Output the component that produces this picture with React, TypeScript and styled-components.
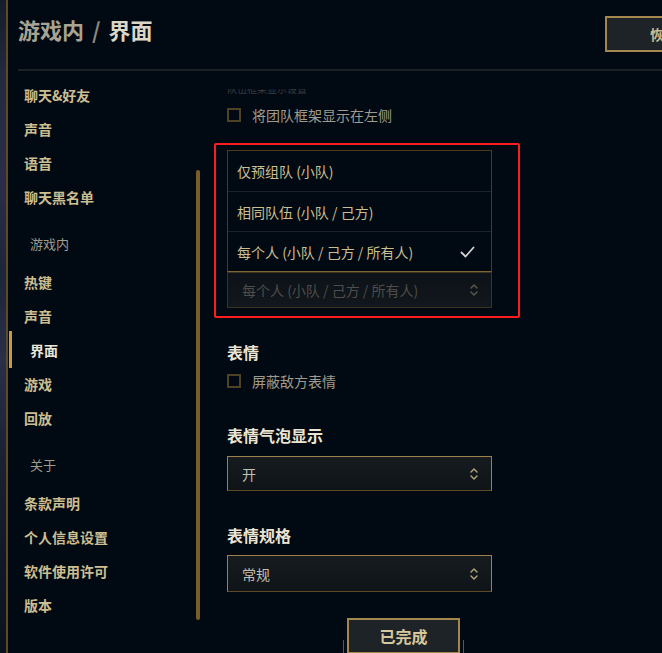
import React from "react";
import styled, { createGlobalStyle } from "styled-components";

const Global = createGlobalStyle`
  html, body { margin: 0; padding: 0; background: #010a13; }
  body { font-family: "Noto Sans CJK SC", "Noto Sans", sans-serif; }
  * { box-sizing: border-box; }
`;

const Screen = styled.div`
  display: flex;
  width: 662px;
  height: 653px;
  overflow: hidden;
  background: #010a13;
`;

const ArtStrip = styled.div`
  width: 6px;
  flex-shrink: 0;
  background: linear-gradient(
    180deg,
    #161c2a 0%,
    #232a3e 12%,
    #2c2c4a 28%,
    #1d2538 42%,
    #2a2f4a 55%,
    #1a2132 70%,
    #121826 85%,
    #0c121d 100%
  );
`;

const FrameLine = styled.div`
  width: 2px;
  flex-shrink: 0;
  background: #5e4a22;
`;

const Main = styled.div`
  flex: 1;
  display: flex;
  flex-direction: column;
  min-width: 0;
`;

const Header = styled.header`
  display: grid;
  grid-template-columns: 587px 174px;
  align-items: start;
  height: 71px;
  flex-shrink: 0;
  margin-left: 10px;
  border-bottom: 2px solid #1c2126;
`;

const Title = styled.h1`
  margin: 14px 0 0;
  font-size: 22px;
  line-height: 30px;
  font-weight: 700;
  color: #a8a392;
  white-space: nowrap;
`;

const TitleCurrent = styled.span`
  color: #dcd6c6;
`;

const TitleSep = styled.span`
  color: #8c887c;
  margin: 0 8px;
`;

const ResetButton = styled.button`
  margin-top: 16px;
  width: 174px;
  height: 36px;
  border: 2px solid #a3874c;
  background: #1e2328;
  color: #cdbe91;
  font-family: inherit;
  font-size: 14px;
  font-weight: 700;
  white-space: nowrap;
  padding: 0;
`;

const Body = styled.div`
  flex: 1;
  display: flex;
  min-height: 0;
  overflow: hidden;
`;

const Sidebar = styled.nav`
  width: 188px;
  flex-shrink: 0;
  padding-top: 7px;
  display: flex;
  flex-direction: column;
  & > * {
    flex-shrink: 0;
  }
`;

const NavItem = styled.div<{ $active?: boolean }>`
  position: relative;
  height: 34px;
  display: flex;
  align-items: center;
  padding-left: ${(p) => (p.$active ? "22px" : "16px")};
  font-size: 14px;
  font-weight: 700;
  color: ${(p) => (p.$active ? "#ece6d6" : "#cdbe91")};
  white-space: nowrap;

  ${(p) =>
    p.$active &&
    `
    &::before {
      content: "";
      position: absolute;
      left: 1px;
      top: -2px;
      width: 3px;
      height: 37px;
      background: #c89b3c;
    }
  `}
`;

const NavSection = styled.div`
  height: 34px;
  margin: 12px 0 5px;
  display: flex;
  align-items: center;
  padding-left: 22px;
  font-size: 13px;
  font-weight: 400;
  color: #a09b8c;
`;

const ScrollTrack = styled.div`
  width: 4px;
  flex-shrink: 0;
  padding-top: 99px;
`;

const ScrollThumb = styled.div`
  width: 4px;
  height: 450px;
  border-radius: 2px;
  background: #7a5c29;
`;

const Content = styled.section`
  margin-left: 27px;
  padding-top: 18px;
  width: 265px;
  flex-shrink: 0;
  display: flex;
  flex-direction: column;
  & > * {
    flex-shrink: 0;
  }
`;

const ClippedLabel = styled.div`
  height: 5px;
  overflow: hidden;
  display: flex;
  align-items: flex-end;
  font-size: 10px;
  line-height: 10px;
  color: #363b41;
  white-space: nowrap;
`;

const CheckRow = styled.label<{ $mt: number }>`
  display: flex;
  align-items: center;
  gap: 11px;
  height: 20px;
  margin-top: ${(p) => p.$mt}px;
  font-size: 14px;
  color: #a09b8c;
`;

const CheckBox = styled.span`
  width: 14px;
  height: 14px;
  border: 2px solid #4f4124;
  flex-shrink: 0;
`;

const Annotated = styled.div<{ $mt: number }>`
  position: relative;
  margin-top: ${(p) => p.$mt}px;

  &::after {
    content: "";
    position: absolute;
    top: -7px;
    left: -13px;
    right: -28px;
    bottom: -10px;
    border: 2px solid #ff1c1c;
    border-radius: 2px;
    pointer-events: none;
  }
`;

const OptionList = styled.ul`
  list-style: none;
  margin: 0;
  padding: 0;
  border: 1px solid #4a3c1f;
  border-bottom-color: #7d6534;
  background: #010a13;
`;

const Option = styled.li`
  height: 40px;
  display: flex;
  align-items: center;
  justify-content: space-between;
  padding: 0 16px 0 9px;
  font-size: 14px;
  color: #cdbe91;
  & + & {
    border-top: 1px solid #1c2228;
  }
`;

const Select = styled.div<{ $dim?: boolean; $mt?: number; $h?: number }>`
  height: ${(p) => p.$h ?? 35}px;
  margin-top: ${(p) => p.$mt ?? 0}px;
  display: flex;
  align-items: center;
  justify-content: space-between;
  padding: 0 13px 0 14px;
  font-size: 14px;
  color: ${(p) => (p.$dim ? "#4e4d49" : "#c3beb0")};
  background: ${(p) =>
    p.$dim ? "linear-gradient(180deg,#0c1217,#11171c)" : "linear-gradient(180deg,#161b20,#0f1419)"};
  border: 1px solid ${(p) => (p.$dim ? "#3c3220" : "#9c8248")};
  ${(p) => !p.$dim && "border-bottom-color: #5e4a24;"}
`;

const Heading = styled.h3<{ $mt: number }>`
  margin: ${(p) => p.$mt}px 0 0;
  height: 20px;
  line-height: 20px;
  font-size: 16px;
  font-weight: 700;
  color: #ece4d2;
`;

const DoneButton = styled.button`
  position: relative;
  margin: 26px 0 0 120px;
  width: 113px;
  height: 36px;
  padding: 0;
  border: 2px solid #a3874c;
  background: #1e2328;
  color: #d6c79c;
  font-family: inherit;
  font-size: 16px;
  font-weight: 700;

  &::before,
  &::after {
    content: "";
    position: absolute;
    top: 20px;
    width: 1px;
    height: 20px;
    background: #6e5628;
  }
  &::before {
    left: -6px;
  }
  &::after {
    right: -6px;
  }
`;

const Arrows = ({ dim }: { dim?: boolean }) => (
  <svg width="8" height="14" viewBox="0 0 8 14" fill="none">
    <path
      d="M1 5 L4 2 L7 5 M1 9 L4 12 L7 9"
      stroke={dim ? "#5e5a4e" : "#b6a67c"}
      strokeWidth="1.4"
      strokeLinecap="round"
      strokeLinejoin="round"
    />
  </svg>
);

const Check = () => (
  <svg width="15" height="12" viewBox="0 0 15 12" fill="none">
    <path d="M1.5 6.5 L5.5 10.5 L13.5 1.5" stroke="#d2d2d2" strokeWidth="1.8" strokeLinecap="round" strokeLinejoin="round" />
  </svg>
);

const navTop = ["聊天&好友", "声音", "语音", "聊天黑名单"];
const navGame = ["热键", "声音", "界面", "游戏", "回放"];
const navAbout = ["条款声明", "个人信息设置", "软件使用许可", "版本"];

export default function App() {
  return (
    <>
      <Global />
      <Screen>
        <ArtStrip />
        <FrameLine />
        <Main>
          <Header>
            <Title>
              游戏内
              <TitleSep>/</TitleSep>
              <TitleCurrent>界面</TitleCurrent>
            </Title>
            <ResetButton>恢复默认设置</ResetButton>
          </Header>
          <Body>
            <Sidebar>
              {navTop.map((t) => (
                <NavItem key={t}>{t}</NavItem>
              ))}
              <NavSection>游戏内</NavSection>
              {navGame.map((t) => (
                <NavItem key={t} $active={t === "界面"}>
                  {t}
                </NavItem>
              ))}
              <NavSection>关于</NavSection>
              {navAbout.map((t) => (
                <NavItem key={t}>{t}</NavItem>
              ))}
            </Sidebar>
            <ScrollTrack>
              <ScrollThumb />
            </ScrollTrack>
            <Content>
              <ClippedLabel>队伍框架显示设置</ClippedLabel>
              <CheckRow $mt={11}>
                <CheckBox />
                将团队框架显示在左侧
              </CheckRow>
              <Annotated $mt={25}>
                <OptionList>
                  <Option>仅预组队 (小队)</Option>
                  <Option>相同队伍 (小队 / 己方)</Option>
                  <Option>
                    每个人 (小队 / 己方 / 所有人)
                    <Check />
                  </Option>
                </OptionList>
                <Select $dim $h={36}>
                  每个人 (小队 / 己方 / 所有人)
                  <Arrows dim />
                </Select>
              </Annotated>
              <Heading $mt={34}>表情</Heading>
              <CheckRow $mt={9}>
                <CheckBox />
                屏蔽敌方表情
              </CheckRow>
              <Heading $mt={34}>表情气泡显示</Heading>
              <Select $mt={11}>
                开
                <Arrows />
              </Select>
              <Heading $mt={34}>表情规格</Heading>
              <Select $mt={10} $h={37}>
                常规
                <Arrows />
              </Select>
              <DoneButton>已完成</DoneButton>
            </Content>
          </Body>
        </Main>
      </Screen>
    </>
  );
}
